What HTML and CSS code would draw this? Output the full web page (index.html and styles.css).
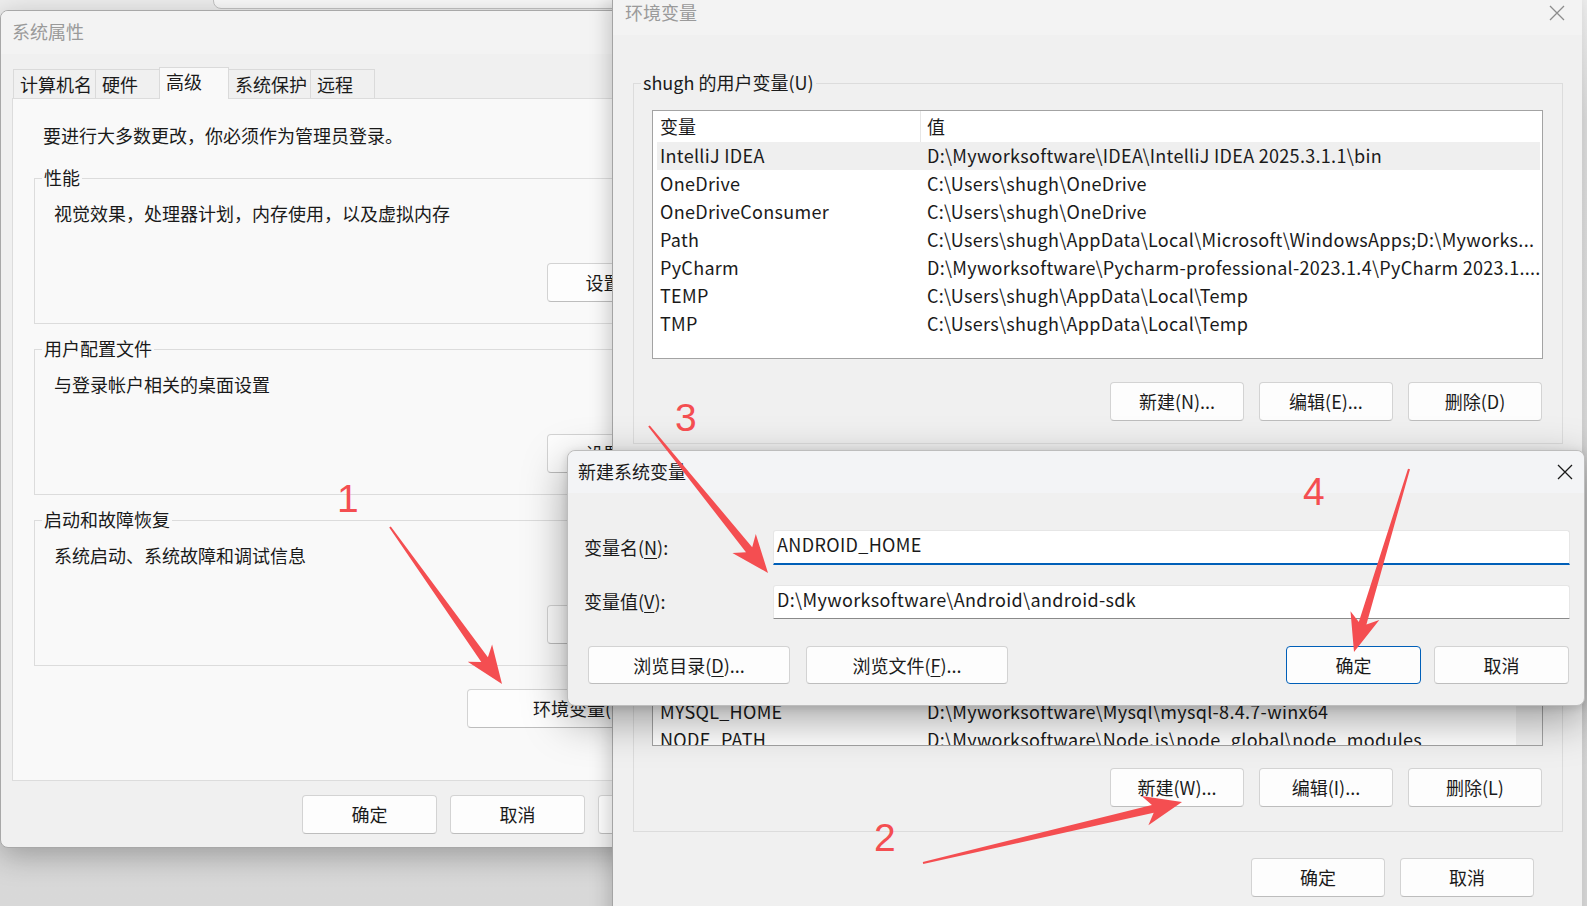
FILE: index.html
```html
<!DOCTYPE html>
<html lang="zh-CN">
<head>
    <meta charset="UTF-8">
    <meta name="viewport" content="width=device-width, initial-scale=1.0">
    <title>新建系统变量</title>
    <link rel="stylesheet" href="styles.css">
</head>
<body>
    <div class="win back-win"></div>

    <!-- 系统属性 -->
    <div class="win sysprops">
        <div class="titlebar"><span class="title">系统属性</span></div>
        <div class="tabs">
            <div class="tab">计算机名</div>
            <div class="tab">硬件</div>
            <div class="tab active">高级</div>
            <div class="tab">系统保护</div>
            <div class="tab">远程</div>
        </div>
        <div class="panel">
            <p class="notice">要进行大多数更改，你必须作为管理员登录。</p>
            <div class="group first">
                <div class="group-title">性能</div>
                <div class="group-text">视觉效果，处理器计划，内存使用，以及虚拟内存</div>
                <button class="btn group-btn">设置(S)...</button>
            </div>
            <div class="group">
                <div class="group-title">用户配置文件</div>
                <div class="group-text">与登录帐户相关的桌面设置</div>
                <button class="btn group-btn">设置(E)...</button>
            </div>
            <div class="group">
                <div class="group-title">启动和故障恢复</div>
                <div class="group-text">系统启动、系统故障和调试信息</div>
                <button class="btn group-btn"></button>
            </div>
            <button class="btn env-btn">环境变量(N)...</button>
        </div>
        <div class="actions">
            <button class="btn">确定</button>
            <button class="btn">取消</button>
            <button class="btn">应用(A)</button>
        </div>
    </div>

    <!-- 环境变量 -->
    <div class="win envwin">
        <div class="titlebar">
            <span class="title">环境变量</span>
            <svg class="close" width="16" height="16" viewBox="0 0 16 16"><path d="M1 1L15 15M15 1L1 15" stroke="#8c8c8c" stroke-width="1.3" fill="none"/></svg>
        </div>

        <div class="group user-group">
            <div class="group-title">shugh 的用户变量(U)</div>
            <div class="listbox">
                <div class="list-main">
                    <div class="row head"><span class="c-name">变量</span><span class="c-val">值</span></div>
                    <div class="row sel"><span class="c-name">IntelliJ IDEA</span><span class="c-val">D:\Myworksoftware\IDEA\IntelliJ IDEA 2025.3.1.1\bin</span></div>
                    <div class="row"><span class="c-name">OneDrive</span><span class="c-val">C:\Users\shugh\OneDrive</span></div>
                    <div class="row"><span class="c-name">OneDriveConsumer</span><span class="c-val">C:\Users\shugh\OneDrive</span></div>
                    <div class="row"><span class="c-name">Path</span><span class="c-val">C:\Users\shugh\AppData\Local\Microsoft\WindowsApps;D:\Myworks...</span></div>
                    <div class="row"><span class="c-name">PyCharm</span><span class="c-val">D:\Myworksoftware\Pycharm-professional-2023.1.4\PyCharm 2023.1....</span></div>
                    <div class="row"><span class="c-name">TEMP</span><span class="c-val">C:\Users\shugh\AppData\Local\Temp</span></div>
                    <div class="row"><span class="c-name">TMP</span><span class="c-val">C:\Users\shugh\AppData\Local\Temp</span></div>
                </div>
            </div>
            <div class="btn-row">
                <button class="btn">新建(N)...</button>
                <button class="btn">编辑(E)...</button>
                <button class="btn">删除(D)</button>
            </div>
        </div>

        <div class="group sys-group">
            <div class="listbox">
                <!-- rows above MYSQL_HOME sit behind the dialog -->
                <div class="list-main">
                    <div class="row"><span class="c-name">MYSQL_HOME</span><span class="c-val">D:\Myworksoftware\Mysql\mysql-8.4.7-winx64</span></div>
                    <div class="row"><span class="c-name">NODE_PATH</span><span class="c-val">D:\Myworksoftware\Node.js\node_global\node_modules</span></div>
                </div>
                <div class="vscroll"></div>
            </div>
            <div class="btn-row">
                <button class="btn">新建(W)...</button>
                <button class="btn">编辑(I)...</button>
                <button class="btn">删除(L)</button>
            </div>
        </div>

        <div class="env-actions">
            <button class="btn">确定</button>
            <button class="btn">取消</button>
        </div>
    </div>

    <!-- 新建系统变量 -->
    <div class="win newvar">
        <div class="titlebar">
            <span class="title">新建系统变量</span>
            <svg class="close" width="16" height="16" viewBox="0 0 16 16"><path d="M1 1L15 15M15 1L1 15" stroke="#1a1a1a" stroke-width="1.3" fill="none"/></svg>
        </div>
        <div class="form-row first-row">
            <label class="form-label">变量名(<u>N</u>):</label>
            <div class="field focus">ANDROID_HOME</div>
        </div>
        <div class="form-row">
            <label class="form-label">变量值(<u>V</u>):</label>
            <div class="field">D:\Myworksoftware\Android\android-sdk</div>
        </div>
        <div class="dlg-btns">
            <button class="btn browse">浏览目录(<u>D</u>)...</button>
            <button class="btn browse">浏览文件(<u>F</u>)...</button>
            <span class="spacer"></span>
            <button class="btn primary">确定</button>
            <button class="btn">取消</button>
        </div>
    </div>

    <!-- 标注 -->
    <svg class="arrows" width="1587" height="906" viewBox="0 0 1587 906">
        <g fill="#f44e51">
            <polygon points="389.2,527.6 481.3,661.9 467.7,661.8 502,684 492.1,644.4 487.9,657.3 390.8,526.4"/>
            <polygon points="648.2,426.6 746.0,552.2 732.4,552.9 768,573 755.8,534.1 752.2,547.2 649.8,425.4"/>
            <polygon points="1408.0,468.7 1358.8,622.1 1350.5,611.3 1354,652 1379.3,619.9 1366.4,624.5 1410.0,469.3"/>
            <polygon points="923.2,864.0 1153.7,812.8 1148.4,825.3 1182,802 1141.6,796.1 1151.9,805.0 922.8,862.0"/>
        </g>
    </svg>
    <span class="mark m1">1</span>
    <span class="mark m2">2</span>
    <span class="mark m3">3</span>
    <span class="mark m4">4</span>
</body>
</html>
```

FILE: styles.css
```css
body {
    margin: 0;
    width: 1587px;
    height: 906px;
    overflow: hidden;
    position: relative;
    background: linear-gradient(#eeeeee 0, #eeeeee 14px, #dadada 120px, #d8d8d8 100%);
    font-family: "Noto Sans CJK SC", sans-serif;
    font-size: 18px;
    color: #1a1a1a;
}
p {
    margin: 0;
}
u {
    text-decoration-thickness: 1px;
    text-underline-offset: 3px;
}

/* windows */
.win {
    position: absolute;
    box-sizing: border-box;
    background: #f0f0f0;
}
.back-win {
    left: 213px;
    top: -40px;
    width: 520px;
    height: 49px;
    background: #fafafa;
    border: 1px solid #c4c4c4;
    border-radius: 8px;
}
.titlebar {
    display: flex;
    justify-content: space-between;
    background: #f3f3f3;
}
.title {
    color: #9a9a9a;
}

/* buttons */
.btn {
    box-sizing: border-box;
    height: 39px;
    padding: 0 0 1px;
    background: #fdfdfd;
    border: 1px solid #d3d3d3;
    border-bottom-color: #bdbdbd;
    border-radius: 4px;
    font: inherit;
    color: #1a1a1a;
}

/* group boxes */
.group {
    box-sizing: border-box;
    border: 1px solid #dcdcdc;
    display: flex;
    flex-direction: column;
}
.group-title {
    align-self: flex-start;
    margin: -14px 0 0 7px;
    padding: 0 2px;
    line-height: 24px;
    background: #f9f9f9;
}

/* 系统属性 */
.sysprops {
    left: 0;
    top: 10px;
    width: 745px;
    height: 838px;
    border: 1px solid #a8a8a8;
    border-radius: 8px;
    overflow: hidden;
    box-shadow: 0 8px 30px rgba(0,0,0,0.28);
}
.sysprops .titlebar {
    height: 43px;
    line-height: 41px;
    padding-left: 11px;
}
.tabs {
    display: flex;
    align-items: flex-end;
    height: 44px;
    padding-left: 12px;
}
.tab {
    box-sizing: border-box;
    height: 29px;
    min-width: 65px;
    padding: 2px 3px 0 6px;
    line-height: 24px;
    border: 1px solid #dadada;
    border-bottom: none;
    margin-right: -1px;
}
.tab.active {
    height: 32px;
    min-width: 70px;
    padding-top: 1px;
    margin-bottom: -1px;
    background: #f9f9f9;
    position: relative;
}
.panel {
    box-sizing: border-box;
    height: 683px;
    margin: 0 11px;
    padding: 0 21px;
    border: 1px solid #dcdcdc;
    background: #f9f9f9;
    display: flex;
    flex-direction: column;
}
.notice {
    margin: 24px 0 3px 9px;
    line-height: 24px;
}
.sysprops .group {
    height: 146px;
    margin-top: 25px;
}
.sysprops .group.first {
    margin-top: 28px;
}
.group-text {
    margin: 12px 0 0 19px;
    line-height: 24px;
}
.group-btn {
    align-self: flex-end;
    width: 151px;
    margin: 38px 12px 0 0;
}
.env-btn {
    align-self: flex-end;
    width: 244px;
    margin-top: 23px;
}
.actions {
    display: flex;
    justify-content: flex-end;
    gap: 13px;
    margin: 14px 11px 0;
}
.actions .btn {
    width: 135px;
}

/* 环境变量 */
.envwin {
    left: 612px;
    top: 0;
    width: 970px;
    height: 930px;
    border-left: 1px solid #a4a4a4;
    box-shadow: -4px 0 18px rgba(0,0,0,0.18);
}
.envwin .titlebar {
    height: 35px;
    line-height: 24px;
    padding-left: 12px;
}
.envwin .close {
    margin: 5px 17px 0 0;
}
.envwin .group {
    margin: 0 19px 0 20px;
}
.envwin .group-title {
    background: #f0f0f0;
}
.user-group {
    margin-top: 48px !important;
    padding-bottom: 22px;
}
.sys-group {
    margin-top: 26px !important;
    padding: 27px 0 24px;
}
.listbox {
    box-sizing: border-box;
    display: flex;
    margin: 16px 19px 0 18px;
    height: 249px;
    background: #fff;
    border: 1px solid #a3a3a3;
    overflow: hidden;
}
.sys-group .listbox {
    margin-top: 0;
    height: 248px;
}
.list-main {
    flex: 1;
    min-width: 0;
}
.sys-group .list-main {
    padding-top: 199px;
}
.vscroll {
    width: 26px;
    background: #f2f2f2;
}
.row {
    display: flex;
    height: 28px;
    line-height: 26px;
    white-space: nowrap;
    letter-spacing: 0.3px;
}
.row.head {
    box-sizing: border-box;
    height: 31px;
    padding-top: 2px;
    letter-spacing: 0;
}
.row.sel {
    background: #efefef;
    margin: 0 2px 0 4px;
}
.row.sel .c-name {
    width: 264px;
    padding-left: 3px;
}
.c-name {
    box-sizing: border-box;
    width: 268px;
    padding-left: 7px;
    flex-shrink: 0;
}
.row.head .c-name {
    border-right: 1px solid #e6e6e6;
    margin-top: -2px;
    padding-top: 2px;
}
.c-val {
    padding-left: 6px;
    overflow: hidden;
}
.btn-row {
    display: flex;
    justify-content: flex-end;
    gap: 15px;
    margin: 23px 20px 0 0;
}
.sys-group .btn-row {
    margin-top: 22px;
}
.btn-row .btn,
.env-actions .btn {
    width: 134px;
}
.env-actions {
    display: flex;
    justify-content: flex-end;
    gap: 15px;
    margin: 26px 48px 0 0;
}

/* 新建系统变量 */
.newvar {
    left: 567px;
    top: 450px;
    width: 1018px;
    height: 256px;
    border: 1px solid #bdbdbd;
    border-radius: 8px;
    box-shadow: 0 14px 44px rgba(0,0,0,0.36), 0 2px 8px rgba(0,0,0,0.12);
}
.newvar .titlebar {
    height: 42px;
    align-items: center;
    padding: 0 0 2px 10px;
    box-sizing: border-box;
    background: #f3f4f6;
    border-radius: 8px 8px 0 0;
}
.newvar .title {
    color: #1a1a1a;
}
.newvar .close {
    margin: 2px 11px 0 0;
}
.form-row {
    display: flex;
    align-items: center;
    margin: 20px 14px 0 16px;
}
.form-row.first-row {
    margin-top: 37px;
}
.form-label {
    width: 189px;
    flex-shrink: 0;
    padding-bottom: 2px;
}
.field {
    flex: 1;
    box-sizing: border-box;
    height: 34px;
    line-height: 27px;
    padding-left: 3px;
    background: #fff;
    border: 1px solid #e6e6e6;
    border-bottom: 1px solid #8a8a8a;
    border-radius: 3px 3px 0 0;
    white-space: nowrap;
    letter-spacing: 0.35px;
}
.field.focus {
    height: 35px;
    border-bottom: 2px solid #005fb8;
}
.dlg-btns {
    display: flex;
    gap: 13px;
    margin: 27px 15px 0 20px;
}
.dlg-btns .btn {
    width: 135px;
    height: 38px;
}
.dlg-btns .browse {
    width: 202px;
}
.dlg-btns .browse + .browse {
    margin-left: 3px;
}
.spacer {
    flex: 1;
}
.btn.primary {
    border-color: #005fb8;
}

/* 标注 */
.arrows {
    position: absolute;
    left: 0;
    top: 0;
    pointer-events: none;
}
.mark {
    position: absolute;
    font-family: "Liberation Sans", sans-serif;
    font-size: 39px;
    line-height: 1;
    color: #f44e51;
}
.m1 { left: 337px; top: 479px; }
.m2 { left: 874px; top: 818px; }
.m3 { left: 675px; top: 398px; }
.m4 { left: 1303px; top: 472px; }
```
